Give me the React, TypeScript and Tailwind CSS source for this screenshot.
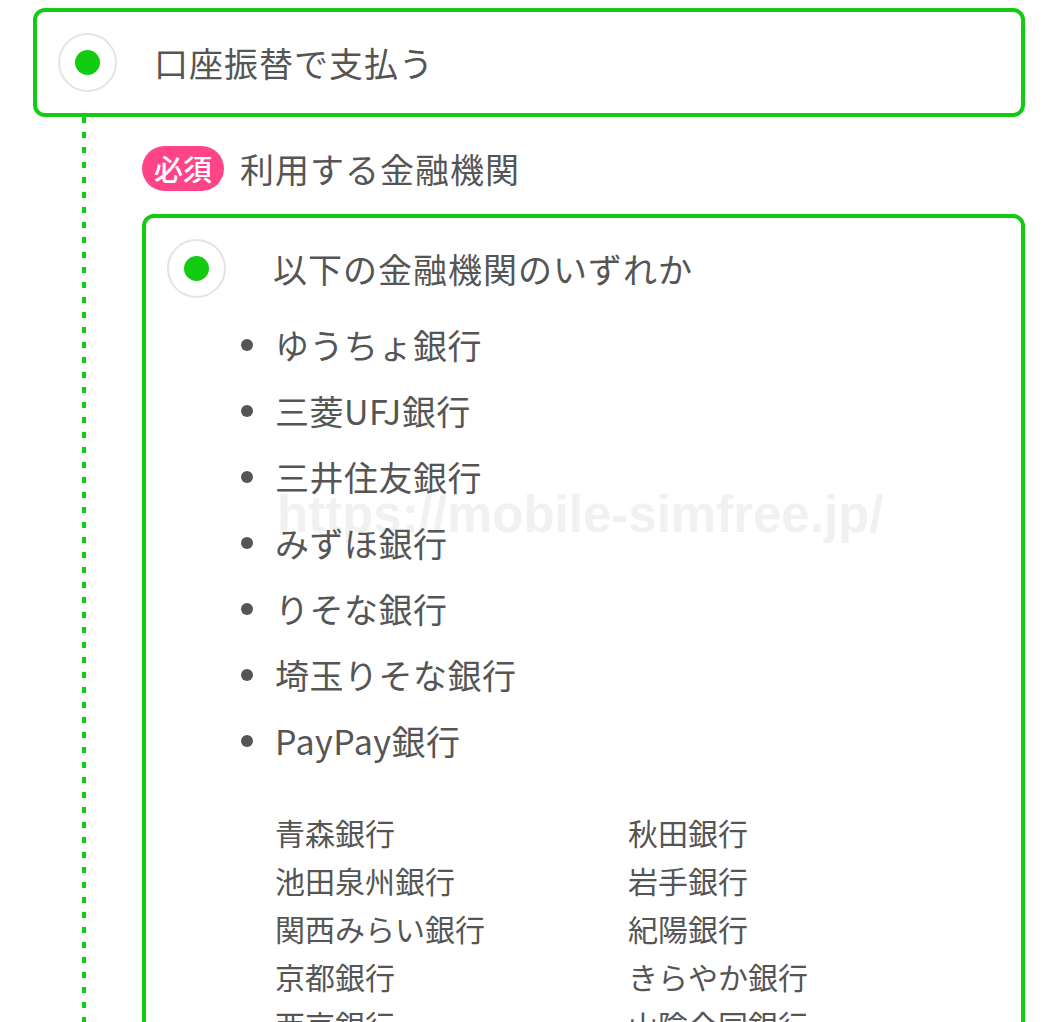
const majorBanks = [
  "ゆうちょ銀行",
  "三菱UFJ銀行",
  "三井住友銀行",
  "みずほ銀行",
  "りそな銀行",
  "埼玉りそな銀行",
  "PayPay銀行",
]

const regionalBanks = [
  "青森銀行",
  "秋田銀行",
  "池田泉州銀行",
  "岩手銀行",
  "関西みらい銀行",
  "紀陽銀行",
  "京都銀行",
  "きらやか銀行",
  "西京銀行",
  "山陰合同銀行",
]

function Radio() {
  return (
    <div className="w-[59px] h-[59px] shrink-0 rounded-full border-2 border-[#e4e4e4] flex items-center justify-center bg-white">
      <div className="w-[25px] h-[25px] rounded-full bg-[#11cc11]" />
    </div>
  )
}

export default function App() {
  return (
    <div className="relative w-[1059px] h-[1022px] overflow-hidden bg-white text-[#555555] font-['Noto_Sans_CJK_JP','Noto_Sans',sans-serif]">
      {/* watermark */}
      <div className="absolute left-[277px] top-[489px] text-[51px] leading-none font-bold text-[#f1f1f1] font-['Liberation_Sans',Arial,sans-serif] whitespace-nowrap pointer-events-none select-none">
        https://mobile-simfree.jp/
      </div>

      <div className="relative pt-[8px]">
        <div className="ml-[33px] w-[992px] h-[109px] border-4 border-[#11cc11] rounded-[12px] flex items-center px-[21px]">
          <Radio />
          <span className="ml-[37px] text-[34px] leading-none tracking-[1px]">口座振替で支払う</span>
        </div>

        <div className="flex ml-[82px]">
          <div className="w-[4px] shrink-0 self-stretch min-h-[910px] bg-[linear-gradient(to_bottom,#11cc11_6px,transparent_6px)] bg-[length:4px_15px]" />

          <div className="ml-[56px] flex-1">
            <div className="mt-[29px] flex items-center">
              <span className="w-[82px] h-[45px] rounded-full bg-[#ff4587] text-white text-[29px] font-medium flex items-center justify-center leading-none">
                必須
              </span>
              <span className="ml-[16px] text-[34px] leading-none tracking-[1px]">利用する金融機関</span>
            </div>

            <div className="mt-[23px] w-[883px] border-4 border-[#11cc11] rounded-[12px] px-[21px] pt-[21px] pb-[40px]">
              <div className="flex items-center">
                <Radio />
                <span className="ml-[47px] text-[34px] leading-none tracking-[1px]">以下の金融機関のいずれか</span>
              </div>

              <ul className="mt-[14px]">
                {majorBanks.map((name) => (
                  <li key={name} className="h-[66px] flex items-center">
                    <span className="ml-[74px] w-[12px] h-[12px] rounded-full bg-[#555555]" />
                    <span className="ml-[22px] text-[34px] leading-none tracking-[0.5px]">{name}</span>
                  </li>
                ))}
              </ul>

              <div className="mt-[34px] ml-[108px] grid grid-cols-[353px_1fr]">
                {regionalBanks.map((name) => (
                  <div key={name} className="h-[48px] flex items-center text-[30px] leading-none">
                    {name}
                  </div>
                ))}
              </div>
            </div>
          </div>
        </div>
      </div>
    </div>
  )
}
